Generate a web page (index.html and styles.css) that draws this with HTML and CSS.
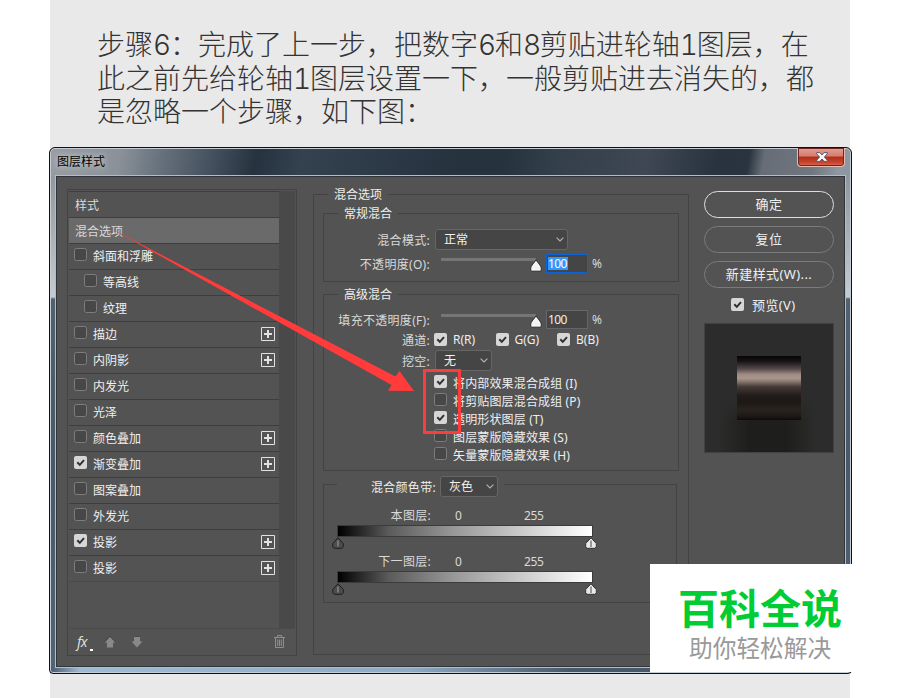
FILE: index.html
```html
<!DOCTYPE html>
<html lang="zh-CN">
<head>
<meta charset="utf-8">
<title>图层样式</title>
<link rel="stylesheet" href="styles.css">
</head>
<body>
<svg class="defs" width="0" height="0" aria-hidden="true">
  <symbol id="off" viewBox="0 0 13 13"><rect x=".5" y=".5" width="12" height="12" rx="2" fill="#474747" stroke="#7d7d7d"/></symbol>
  <symbol id="on" viewBox="0 0 13 13"><rect width="13" height="13" rx="2" fill="#d6d6d6"/><path d="M3.3 6.3 5.8 8.9 10 4.2" fill="none" stroke="#303030" stroke-width="2"/></symbol>
  <symbol id="plus" viewBox="0 0 14 14"><path d="M.5.5h13v13H.5z" fill="none" stroke="#e2e2e2"/><path d="M7 3v8M3 7h8" stroke="#e2e2e2" stroke-width="2"/></symbol>
  <symbol id="chev" viewBox="0 0 8 5"><path d="M.6.6 4 4 7.400.6" fill="none" stroke="#b4b4b4" stroke-width="1.1"/></symbol>
  <symbol id="thumb" viewBox="0 0 12 13"><path d="M6 .8C7.200 3 11.300 7 11.300 9v2q0 1.200-1.200 1.200H1.900Q.7 12.200.7 11V9C.7 7 4.800 3 6 .8z" fill="#f4f4f4" stroke="#2c2c2c"/></symbol>
  <symbol id="stop-dark" viewBox="0 0 12 12"><path d="M6 .8 11.300 6.500v3.300L9.900 11.300H2.100L.7 9.800V6.500z" fill="#4c4c4c" stroke="#1f1f1f"/><path d="M6 3.500v6" stroke="#777" stroke-width="2"/></symbol>
  <symbol id="stop-light" viewBox="0 0 12 12"><path d="M6 .8 11.300 6.500v3.300L9.900 11.300H2.100L.7 9.800V6.500z" fill="#e9e9e9" stroke="#333"/><path d="M6 3.500v6.500" stroke="#999" stroke-width="2"/></symbol>
</svg>
<main class="page">
  <p class="intro"><span>步骤<b>6</b>：完成了上一步，把数字<b>6</b>和<b>8</b>剪贴进轮轴<b>1</b>图层，在</span><span>此之前先给轮轴<b>1</b>图层设置一下，一般剪贴进去消失的，都</span><span>是忽略一个步骤，如下图：</span></p>
  <section class="dialog">
    <header class="titlebar">
      <span class="title">图层样式</span>
      <span class="close"><svg width="12" height="10" viewBox="0 0 12 10"><path d="M.7.6h3.200L6 3 8.100.6h3.200v1.200L8.400 5l2.900 3.200v1.200H8.100L6 7 3.900 9.400H.7V8.200L3.600 5 .7 1.800z" fill="#f5f5f5" stroke="#4a4f66" stroke-width=".9"/></svg></span>
    </header>
    <div class="content">
      <aside class="styles">
        <div class="list-wrap">
          <ul class="list">
            <li class="plain">样式</li>
            <li class="plain selected">混合选项</li>
            <li><svg class="cb"><use href="#off"/></svg>斜面和浮雕</li>
            <li class="sub"><svg class="cb"><use href="#off"/></svg>等高线</li>
            <li class="sub"><svg class="cb"><use href="#off"/></svg>纹理</li>
            <li><svg class="cb"><use href="#off"/></svg>描边<svg class="plus"><use href="#plus"/></svg></li>
            <li><svg class="cb"><use href="#off"/></svg>内阴影<svg class="plus"><use href="#plus"/></svg></li>
            <li><svg class="cb"><use href="#off"/></svg>内发光</li>
            <li><svg class="cb"><use href="#off"/></svg>光泽</li>
            <li><svg class="cb"><use href="#off"/></svg>颜色叠加<svg class="plus"><use href="#plus"/></svg></li>
            <li><svg class="cb"><use href="#on"/></svg>渐变叠加<svg class="plus"><use href="#plus"/></svg></li>
            <li><svg class="cb"><use href="#off"/></svg>图案叠加</li>
            <li><svg class="cb"><use href="#off"/></svg>外发光</li>
            <li><svg class="cb"><use href="#on"/></svg>投影<svg class="plus"><use href="#plus"/></svg></li>
            <li><svg class="cb"><use href="#off"/></svg>投影<svg class="plus"><use href="#plus"/></svg></li>
          </ul>
          <div class="track"></div>
        </div>
        <footer class="tools">
          <span class="fx">fx</span><i class="dot"></i>
          <svg class="up" width="12" height="12" viewBox="0 0 12 12"><path d="M6 .5 11.500 6.500H9v5H3v-5H.5z" fill="#898989"/><path d="M.5 6 6 .3 11.500 6" fill="none" stroke="#333" stroke-width=".7"/></svg>
          <svg class="down" width="12" height="12" viewBox="0 0 12 12"><path d="M6 11.500.5 5.500H3v-5h6v5h2.500z" fill="#898989"/><path d="M3 .4h6" stroke="#333" stroke-width=".7"/></svg>
          <svg class="trash" width="11" height="13" viewBox="0 0 11 13"><path d="M0 2.500h11M3.500 2.500v-2h4v2M1.500 3v9.500h8V3M3.700 4.500V11M5.500 4.500V11M7.300 4.500V11" fill="none" stroke="#8f8f8f"/></svg>
        </footer>
      </aside>
      <section class="options">
        <h2 class="legend">混合选项</h2>
        <div class="group normal">
          <h3 class="legend">常规混合</h3>
          <div class="row mode"><span class="label">混合模式:</span><span class="select wide">正常<svg class="chev"><use href="#chev"/></svg></span></div>
          <div class="row opacity"><span class="label">不透明度(O):</span><span class="slider"><i></i><svg><use href="#thumb"/></svg></span><span class="field focus"><b>100</b></span><span class="pct">%</span></div>
        </div>
        <div class="group advanced">
          <h3 class="legend">高级混合</h3>
          <div class="row fill"><span class="label">填充不透明度(F):</span><span class="slider"><i></i><svg><use href="#thumb"/></svg></span><span class="field">100</span><span class="pct">%</span></div>
          <div class="row channels"><span class="label">通道:</span><span class="ch"><svg class="cb"><use href="#on"/></svg>R(R)</span><span class="ch"><svg class="cb"><use href="#on"/></svg>G(G)</span><span class="ch"><svg class="cb"><use href="#on"/></svg>B(B)</span></div>
          <div class="row knock"><span class="label">挖空:</span><span class="select">无<svg class="chev"><use href="#chev"/></svg></span></div>
          <div class="checks">
            <div><svg class="cb"><use href="#on"/></svg><span>将内部效果混合成组 (I)</span></div>
            <div><svg class="cb"><use href="#off"/></svg><span>将剪贴图层混合成组 (P)</span></div>
            <div><svg class="cb"><use href="#on"/></svg><span>透明形状图层 (T)</span></div>
            <div><svg class="cb"><use href="#off"/></svg><span>图层蒙版隐藏效果 (S)</span></div>
            <div><svg class="cb"><use href="#off"/></svg><span>矢量蒙版隐藏效果 (H)</span></div>
          </div>
        </div>
        <div class="group blend">
          <div class="blend-head"><span class="label">混合颜色带:</span><span class="select">灰色<svg class="chev"><use href="#chev"/></svg></span></div>
          <div class="range"><span class="label">本图层:</span><span class="lo">0</span><span class="hi">255</span></div>
          <div class="ramp"></div>
          <div class="stops"><svg><use href="#stop-dark"/></svg><svg><use href="#stop-light"/></svg></div>
          <div class="range second"><span class="label">下一图层:</span><span class="lo">0</span><span class="hi">255</span></div>
          <div class="ramp"></div>
          <div class="stops"><svg><use href="#stop-dark"/></svg><svg><use href="#stop-light"/></svg></div>
        </div>
      </section>
      <section class="actions">
        <span class="btn primary">确定</span>
        <span class="btn">复位</span>
        <span class="btn">新建样式(W)...</span>
        <div class="preview-toggle"><svg class="cb"><use href="#on"/></svg>预览(V)</div>
        <div class="preview"><div class="shade"></div><div class="swatch"></div></div>
      </section>
    </div>
  </section>
  <svg class="arrow" width="306" height="166" viewBox="109 227 306 166"><path d="M109 227.500 395.500 376.500 399.500 371 414 391 388 390.800 391.500 385z" fill="#ff3b3b"/></svg>
  <div class="mark"></div>
  <div class="brand"><strong>百科全说</strong><span>助你轻松解决</span></div>
</main>
</body>
</html>
```
FILE: styles.css
```css
* { box-sizing: border-box; }
body { margin: 0; background: #fff; font-family: "Noto Sans", "Noto Sans CJK SC", sans-serif; }
h2, h3, p, ul { margin: 0; padding: 0; font-weight: 400; list-style: none; }
svg { display: block; flex: none; }
.defs { position: absolute; }
.page { height: 698px; margin: 0 50px; background: #e9e9e9; overflow: visible; }

.intro { height: 147px; padding: 29px 0 0 47px; font: 300 28px/33.5px Inter, "Noto Sans CJK SC", sans-serif; font-variant-numeric: tabular-nums; color: #333; text-spacing-trim: space-all; }
.intro span { display: block; white-space: nowrap; }
.intro b { font-weight: 300; letter-spacing: -1.200px; }

.dialog {
  width: 803px; height: 527px; margin-left: -1px; padding: 0 5px;
  border: 1px solid #111; border-radius: 6px 6px 4px 4px;
  box-shadow: inset 0 0 0 1px #c5ccd3;
  background:
    linear-gradient(100deg, #979da3 0, #8b9198 70px, #67727d 110px, #45515e 160px, #26323e 205px, #34414f 250px, #26323e 400px, #26323e 450px, #343f4c 500px, #3e4753 590px, #28333f 660px, #29343f 690px, #666d77 705px, #70777f 755px, #8f98a2 780px, #8c97a2 100%) 0 0 / 100% 28px no-repeat,
    linear-gradient(90deg, #46586b, #a1bad4 30px, #8faac6 45%, #4a5969 65%) 0 100% / 100% 6px no-repeat,
    linear-gradient(#90979d 28px, #c5cbd0 149px, #526170 151px, #49586a 60%, #526476);
}
.titlebar { height: 27px; display: flex; justify-content: space-between; padding-left: 2px; }
.title { font: 12px/28px "Liberation Sans", "Noto Sans CJK SC", sans-serif; color: #000; text-shadow: 0 0 5px #c8ccd0, 0 0 9px #c8ccd0; }
.close { width: 48px; height: 19px; margin-right: 1px; display: grid; place-items: center; padding-left: 2px; border: 1px solid #e7b9b3; border-top: 0; border-radius: 0 0 4px 4px; background: linear-gradient(#e5a097, #d57c70 45%, #b52b18 50%, #c6452e 80%, #d5705b); box-shadow: inset 0 0 0 1px #6b2620; }
.content { width: 791px; height: 493px; display: flex; align-items: flex-start; border: 1px solid #b4bdc6; background: #535353; box-shadow: inset 0 0 0 1px #30353b; font-size: 12px; color: #efefef; padding: 13px 11px 0; }

.styles { width: 230px; height: 467px; border: 1px solid #434343; padding: 1px; }
.list-wrap { display: flex; height: 437px; }
.list { width: 211px; }
.list li { height: 26px; display: flex; align-items: center; border-top: 1px solid #3e3e3e; padding: 0 4px 0 5px; line-height: 24px; }
.list li:last-child { height: 27px; border-bottom: 1px solid #4a4a4a; }
.list .plain { padding: 2px 0 0 6px; color: #d9d9d9; }
.list .selected { background: #6a6a6a; }
.list .sub { padding-left: 15px; }
.cb { width: 13px; height: 13px; margin-right: 7px; }
.list .cb { margin: -4px 6px 0 0; }
.plus { width: 14px; height: 14px; margin: -2px 0 0 auto; }
.list li:last-child .plus { margin-top: -1px; }
.track { width: 16px; background: #494949; border-radius: 0 0 2px 0; }
.tools { height: 26px; display: flex; align-items: center; border-top: 1px solid #4a4a4a; padding: 0 10px 0 8px; }
.fx { width: 13px; font: italic 14px/24px "Noto Sans", sans-serif; letter-spacing: -.6px; color: #ddd; }
.dot { width: 3px; height: 2px; margin-top: 17px; background: #fff; }
.up { margin-left: 11px; }
.down { margin-left: 15px; }
.trash { margin-left: auto; }

.options { width: 376px; height: 461px; margin: 5px 0 0 16px; padding-left: 9px; border: 1px solid #434343; }
.legend { width: 60px; height: 16px; margin: -9px 0 0 5px; padding-left: 6px; background: #535353; font-size: 12px; line-height: 18px; white-space: nowrap; }
.group { width: 356px; border: 1px solid #434343; }
.group .legend { margin-left: 14px; }
.normal { height: 69px; margin-top: 11px; }
.advanced { height: 177px; margin-top: 12px; }
.blend { width: 354px; height: 119px; margin-top: 13px; }
.row { display: flex; align-items: center; white-space: nowrap; }
.label { color: #d9d9d9; text-align: right; white-space: nowrap; letter-spacing: .3px; }
.row .label { width: 106px; margin-right: 5px; }
.mode { height: 21px; margin-top: 8px; }
.opacity { height: 19px; margin-top: 4px; }
.fill { height: 19px; margin-top: 8px; }
.channels { height: 17px; margin-top: 2px; }
.channels .label { margin-right: 4px; }
.ch { width: 61.500px; display: flex; align-items: center; }
.ch .cb { margin-right: 6px; margin-top: -1px; }
.knock { height: 21px; margin-top: 2px; }
.select { width: 57px; height: 21px; display: flex; align-items: center; justify-content: space-between; padding: 0 3px 0 8px; border: 1px solid #666; border-radius: 3px; background: #454545; color: #f2f2f2; line-height: 20px; }
.wide { width: 133px; }
.blend-head .select { width: 58px; }
.chev { width: 8px; height: 5px; }
.slider { width: 101px; height: 15px; margin: 0 4px 0 6px; }
.slider i { display: block; height: 3px; width: 95px; margin-top: 2px; background: #767676; }
.slider svg { width: 12px; height: 13px; margin: -2px 0 0 89px; }
.field { width: 42px; height: 19px; padding-left: 1px; border: 1px solid #666; background: #454545; line-height: 18px; letter-spacing: -.6px; }
.field b { display: inline-block; height: 13px; line-height: 13px; padding-right: 1px; font-weight: 400; background: #3398fe; color: #fff; }
.focus { border-color: #0a64d8; }
.pct { margin-left: 4px; color: #d9d9d9; }
.checks { padding: 2px 0 0 110px; }
.checks div { display: flex; align-items: center; height: 18px; white-space: nowrap; }
.checks .cb { margin: -1px 6px 0 0; }
.checks span { padding-top: 1px; letter-spacing: .15px; }
.blend-head { width: 167px; height: 21px; margin: -9px 0 0 13px; display: flex; align-items: center; background: #535353; }
.blend-head .label { width: 99px; margin-right: 4px; color: #efefef; }
.range { height: 16px; display: flex; align-items: center; margin-top: 10px; margin-bottom: 2px; color: #d9d9d9; }
.range.second { margin-top: 4px; }
.range .label { width: 107px; }
.lo { width: 93px; padding-left: 24px; }
.hi { letter-spacing: -.4px; }
.ramp { width: 256px; height: 12px; margin: 0 0 0 13px; border: 1px solid #3b3b3b; background: linear-gradient(90deg, #000, #5b5b5b 20%, #999 46%, #fff); }
.stops { width: 265px; height: 12px; margin-left: 8px; display: flex; justify-content: space-between; }
.stops svg { width: 12px; height: 12px; }

.actions { width: 130px; margin: 2px 0 0 15px; font-size: 13px; }
.btn { display: block; height: 27px; margin-bottom: 8px; border: 1px solid #7b7b7b; border-radius: 14px; text-align: center; line-height: 25px; letter-spacing: .4px; }
.primary { border-color: #dedede; }
.preview-toggle { display: flex; align-items: center; height: 17px; padding-left: 27px; letter-spacing: .4px; }
.preview-toggle .cb { margin-right: 8px; }
.preview { position: relative; width: 130px; height: 130px; margin-top: 10px; border: 1px solid #424242; background: #2c2c2c; padding: 32px; }
.shade { position: absolute; left: 14px; top: 76px; width: 96px; height: 52px; background: linear-gradient(90deg, transparent, #1e1e1c 32%, #1e1e1c 70%, transparent); -webkit-mask: linear-gradient(transparent, #000 40%); mask: linear-gradient(transparent, #000 40%); }
.swatch { position: relative; width: 64px; height: 64px; background: linear-gradient(#050505, #161213 8%, #54494a 20%, #a18c82 29%, #a8958b 35%, #8f7d74 39%, #453a37 48%, #211c1a 62%, #1e1815 72%, #29231e 84%, #1d1916 94%, #0d0b0a); }

.arrow { position: absolute; left: 109px; top: 227px; }
.mark { position: absolute; left: 423px; top: 369px; width: 38px; height: 65px; border: 3px solid #ff3b3b; }
.brand { position: absolute; left: 650px; top: 564px; width: 203px; height: 108px; padding: 21px 0 0 28px; background: #fff; font-family: "Liberation Sans", "Noto Sans CJK SC", sans-serif; white-space: nowrap; }
.brand strong { display: block; font-size: 41px; line-height: 50px; color: #00cc33; font-weight: 700; }
.brand span { display: block; margin-left: 11px; font-size: 23.700px; line-height: 28px; color: #999; }
```
